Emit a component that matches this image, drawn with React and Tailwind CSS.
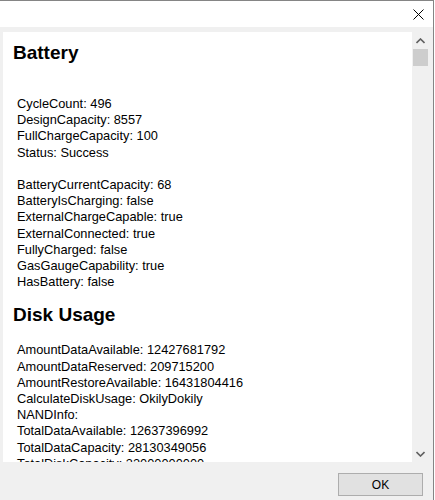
import React from "react";

const battery1 = [
    ["CycleCount", "496"],
    ["DesignCapacity", "8557"],
    ["FullChargeCapacity", "100"],
    ["Status", "Success"],
];

const battery2 = [
    ["BatteryCurrentCapacity", "68"],
    ["BatteryIsCharging", "false"],
    ["ExternalChargeCapable", "true"],
    ["ExternalConnected", "true"],
    ["FullyCharged", "false"],
    ["GasGaugeCapability", "true"],
    ["HasBattery", "false"],
];

const disk = [
    ["AmountDataAvailable", "12427681792"],
    ["AmountDataReserved", "209715200"],
    ["AmountRestoreAvailable", "16431804416"],
    ["CalculateDiskUsage", "OkilyDokily"],
    ["NANDInfo", ""],
    ["TotalDataAvailable", "12637396992"],
    ["TotalDataCapacity", "28130349056"],
    ["TotalDiskCapacity", "32000000000"],
];

function Lines({ items }) {
    return (
        <div className="ml-[4px] text-[12.8px] leading-[16.2px] text-black">
            {items.map(([k, v]) => (
                <div key={k} className="whitespace-nowrap">
                    {k}: {v}
                </div>
            ))}
        </div>
    );
}

export default function App() {
    return (
        <div className="w-[434px] h-[500px] bg-[#f0f0f0] border-t border-r border-[#858585] flex flex-col font-['Liberation_Sans',Arial,sans-serif] overflow-hidden">
            {/* Title bar */}
            <div className="h-[26px] bg-white flex justify-end items-start shrink-0">
                <svg width="11" height="11" viewBox="0 0 11 11" className="mt-[8px] mr-[9px]">
                    <path d="M0.5 0.5 L10.5 10.5 M10.5 0.5 L0.5 10.5" stroke="#000" strokeWidth="1" fill="none" />
                </svg>
            </div>

            {/* Body */}
            <div className="flex pt-[5px] pl-[3px] shrink-0">
                <div className="w-[409px] h-[430px] bg-white overflow-hidden pl-[10px]">
                    <h2 className="mt-[10px] text-[19px] leading-[22px] font-bold text-black">Battery</h2>
                    <div className="mt-[32px]">
                        <Lines items={battery1} />
                        <div className="h-[16.2px]" />
                        <Lines items={battery2} />
                    </div>
                    <h2 className="mt-[14px] text-[19px] leading-[22px] font-bold text-black">Disk Usage</h2>
                    <div className="mt-[16px]">
                        <Lines items={disk} />
                    </div>
                </div>

                {/* Scrollbar */}
                <div className="w-[17px] h-[430px] bg-[#f0f0f0] flex flex-col items-center">
                    <div className="h-[17px] w-full flex items-center justify-center">
                        <svg width="9" height="6" viewBox="0 0 9 6">
                            <path d="M0.5 5 L4.5 1 L8.5 5" stroke="#606060" strokeWidth="1.6" fill="none" />
                        </svg>
                    </div>
                    <div className="w-[15px] h-[17px] bg-[#cdcdcd]" />
                    <div className="flex-1" />
                    <div className="h-[17px] w-full flex items-center justify-center">
                        <svg width="9" height="6" viewBox="0 0 9 6">
                            <path d="M0.5 1 L4.5 5 L8.5 1" stroke="#606060" strokeWidth="1.6" fill="none" />
                        </svg>
                    </div>
                </div>
            </div>

            {/* Footer */}
            <div className="flex justify-end pt-[11px] pr-[10px]">
                <button className="w-[85px] h-[23px] bg-[#e1e1e1] border border-[#adadad] text-[12px] text-black flex items-center justify-center">
                    OK
                </button>
            </div>
        </div>
    );
}
